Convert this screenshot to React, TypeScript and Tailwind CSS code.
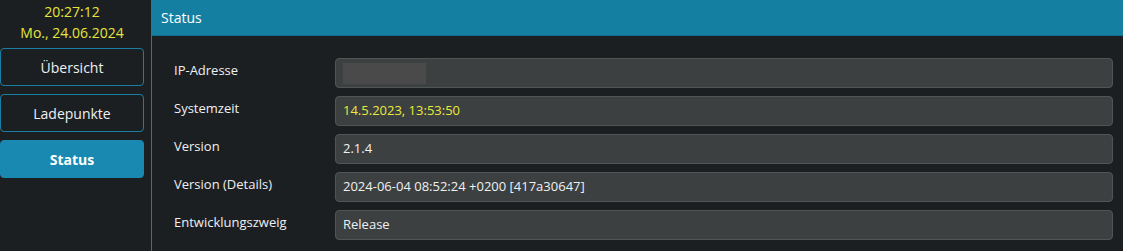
const rows: { label: string; value?: string; yellow?: boolean; hidden?: boolean }[] = [
  { label: "IP-Adresse", hidden: true },
  { label: "Systemzeit", value: "14.5.2023, 13:53:50", yellow: true },
  { label: "Version", value: "2.1.4" },
  { label: "Version (Details)", value: "2024-06-04 08:52:24 +0200 [417a30647]" },
  { label: "Entwicklungszweig", value: "Release" },
];

export default function App() {
  return (
    <div
      className="flex h-[251px] w-[1123px] overflow-hidden bg-[#1c1f22] text-[13px] text-[#eef0f2]"
      style={{ fontFamily: '"Open Sans", "Noto Sans", sans-serif' }}
    >
      {/* Sidebar */}
      <div className="flex w-[144px] shrink-0 flex-col">
        <div className="flex flex-col items-center pt-[1px] text-[14px] leading-[21px] text-[#e6e63a]">
          <span>20:27:12</span>
          <span>Mo., 24.06.2024</span>
        </div>
        <div className="mt-[5px] flex flex-col gap-[8px]">
          <button className="h-[38px] rounded-[4px] border border-[#1b7fa3] text-[14px] text-[#eef0f2]">
            Übersicht
          </button>
          <button className="h-[38px] rounded-[4px] border border-[#1b7fa3] text-[14px] text-[#eef0f2]">
            Ladepunkte
          </button>
          <button className="h-[38px] rounded-[4px] border border-[#1989b1] bg-[#1989b1] text-[14px] font-bold text-white">
            Status
          </button>
        </div>
      </div>

      {/* Main panel */}
      <div className="ml-[7px] flex flex-1 flex-col border-l border-[#157fa2]">
        <div className="flex h-[36px] items-center border-b border-[#126e8c] bg-[#157fa2] pl-[9px] text-[14px] text-white">
          Status
        </div>
        <div className="flex flex-col gap-[8px] pl-[22px] pr-[10px] pt-[22px]">
          {rows.map((r) => (
            <div key={r.label} className="flex h-[30px]">
              <div className="w-[161px] shrink-0 pt-[3px] text-[13px]">{r.label}</div>
              <div className="flex flex-1 items-center rounded-[4px] border border-[#505455] bg-[#3d4041] px-[7px]">
                {r.hidden ? (
                  <div className="h-[21px] w-[83px] bg-[#4a4a4a]" />
                ) : (
                  <span className={r.yellow ? "text-[#eaea3c]" : "text-[#eef0f2]"}>{r.value}</span>
                )}
              </div>
            </div>
          ))}
        </div>
      </div>
    </div>
  );
}
